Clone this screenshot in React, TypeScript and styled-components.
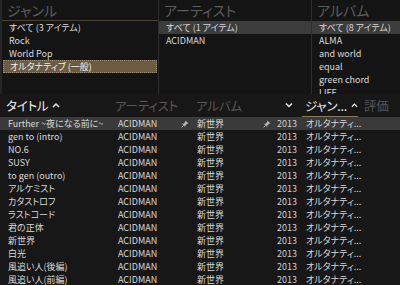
import styled, { createGlobalStyle } from "styled-components";

const GlobalStyle = createGlobalStyle`
    html, body {
        margin: 0;
        padding: 0;
        background: #161616;
    }
    * {
        box-sizing: border-box;
    }
`;

const genres = ["すべて (3 アイテム)", "Rock", "World Pop", "オルタナティブ (一般)"];
const artists = ["すべて (1 アイテム)", "ACIDMAN"];
const albums = ["すべて (8 アイテム)", "ALMA", "and world", "equal", "green chord", "LIFE"];

const tracks = [
    "Further ~夜になる前に~",
    "gen to (intro)",
    "NO.6",
    "SUSY",
    "to gen (outro)",
    "アルケミスト",
    "カタストロフ",
    "ラストコード",
    "君の正体",
    "新世界",
    "白光",
    "風追い人(後編)",
    "風追い人(前編)",
];

function Pin() {
    return (
        <svg width="8" height="8" viewBox="0 0 8 8">
            <path d="M4.5 0.5 L7.5 3.5 L6 3.8 L4.3 5.5 L4.2 7 L1 3.8 L2.5 3.7 L4.2 2 Z" fill="#b8b8b8" />
            <path d="M2.6 5.4 L0.6 7.4" stroke="#b8b8b8" strokeWidth="1" />
        </svg>
    );
}

function Chevron({ up }: { up?: boolean }) {
    return (
        <svg width="8" height="6" viewBox="0 0 8 6">
            <polyline
                points={up ? "1,5 4,2 7,5" : "1,1.5 4,4.5 7,1.5"}
                fill="none"
                stroke="#e6e6e6"
                strokeWidth="1.5"
            />
        </svg>
    );
}

export default function App() {
    return (
        <Screen>
            <GlobalStyle />
            <Browser>
                <Pane $width={157}>
                    <PaneHeader $focused>ジャンル</PaneHeader>
                    {genres.map((g, i) => (
                        <PaneRow key={g} $selected={i === 3}>{g}</PaneRow>
                    ))}
                </Pane>
                <Pane $width={153}>
                    <PaneHeader>アーティスト</PaneHeader>
                    {artists.map((a, i) => (
                        <PaneRow key={a} $current={i === 0}>{a}</PaneRow>
                    ))}
                </Pane>
                <Pane $last>
                    <PaneHeader>アルバム</PaneHeader>
                    {albums.map((a, i) => (
                        <PaneRow key={a} $current={i === 0}>{a}</PaneRow>
                    ))}
                </Pane>
            </Browser>
            <TrackList>
                <HeaderRow>
                    <HeadCell $active $pad={6}><span>タイトル</span><Chevron up /></HeadCell>
                    <HeadCell $pad={1}><span>アーティスト</span></HeadCell>
                    <HeadCell $pad={3}><span>アルバム</span></HeadCell>
                    <HeadCell $pad={10}><Chevron /></HeadCell>
                    <HeadCell $active $pad={3} $underline><span>ジャン...</span><Chevron up /></HeadCell>
                    <HeadCell $pad={6}><span>評価</span></HeadCell>
                </HeaderRow>
                {tracks.map((t, i) => (
                    <TrackRow key={t} $current={i === 0}>
                        <Cell $pad={8}>{t}</Cell>
                        <Cell $pad={4}>
                            ACIDMAN
                            {i === 0 && <Pin />}
                        </Cell>
                        <Cell $pad={4}>
                            新世界
                            {i === 0 && <Pin />}
                        </Cell>
                        <YearCell>2013</YearCell>
                        <GenreCell>オルタナティ...</GenreCell>
                        <Cell $pad={4} />
                    </TrackRow>
                ))}
            </TrackList>
        </Screen>
    );
}

const Screen = styled.div`
    width: 400px;
    height: 285px;
    overflow: hidden;
    background: #171717;
    color: #d9d9d9;
    font-family: "Noto Sans CJK JP", "Noto Sans", sans-serif;
    font-feature-settings: "palt";
    font-size: 9px;
    display: flex;
    flex-direction: column;
`;

const Browser = styled.div`
    display: flex;
    height: 94px;
    border-left: 2px solid #262626;
    background: #141414;
`;

const Pane = styled.div<{ $width?: number; $last?: boolean }>`
    width: ${p => (p.$width ? `${p.$width}px` : "auto")};
    flex: ${p => (p.$last ? 1 : "none")};
    border-right: ${p => (p.$last ? "none" : "1px solid #2e2e2e")};
    overflow: hidden;
    display: flex;
    flex-direction: column;
`;

const PaneHeader = styled.div<{ $focused?: boolean }>`
    height: 21px;
    flex: none;
    padding-left: 5px;
    font-size: 14px;
    line-height: 20px;
    color: #5c5c5c;
    border-bottom: 1px solid ${p => (p.$focused ? "#4b4032" : "transparent")};
`;

const PaneRow = styled.div<{ $selected?: boolean; $current?: boolean }>`
    height: 13px;
    flex: none;
    line-height: 12px;
    padding-left: 6px;
    margin: ${p => (p.$selected ? "0 1px 0 1px" : "0")};
    white-space: nowrap;
    color: ${p => (p.$selected ? "#f2f2f2" : "#dadada")};
    background: ${p => (p.$selected ? "#6b5b42" : p.$current ? "#3c3c3c" : "transparent")};
    border: 1px dotted ${p => (p.$selected ? "#9c8d75" : "transparent")};
`;

const TrackList = styled.div`
    display: flex;
    flex-direction: column;
    flex: 1;
`;

const HeaderRow = styled.div`
    display: grid;
    grid-template-columns: 114px 79px 82px 27px 56px 1fr;
    height: 23px;
    align-items: stretch;
`;

const HeadCell = styled.div<{ $active?: boolean; $pad: number; $underline?: boolean }>`
    display: flex;
    align-items: center;
    gap: 4px;
    padding-left: ${p => p.$pad}px;
    font-size: 12.5px;
    letter-spacing: -0.2px;
    white-space: nowrap;
    color: ${p => (p.$active ? "#ececec" : "#585858")};
    border-bottom: 1px solid ${p => (p.$underline ? "#8a785c" : "transparent")};
`;

const TrackRow = styled.div<{ $current?: boolean }>`
    display: grid;
    grid-template-columns: 114px 79px 82px 27px 56px 1fr;
    height: 13px;
    line-height: 13px;
    background: ${p => (p.$current ? "#3a3a3a" : "transparent")};
`;

const Cell = styled.div<{ $pad: number }>`
    display: flex;
    align-items: center;
    justify-content: space-between;
    padding-left: ${p => p.$pad}px;
    padding-right: 4px;
    white-space: nowrap;
    overflow: hidden;
`;

const YearCell = styled.div`
    text-align: right;
    padding-right: 5px;
    color: #cfcfcf;
`;

const GenreCell = styled.div`
    padding-left: 4px;
    white-space: nowrap;
    overflow: visible;
`;
